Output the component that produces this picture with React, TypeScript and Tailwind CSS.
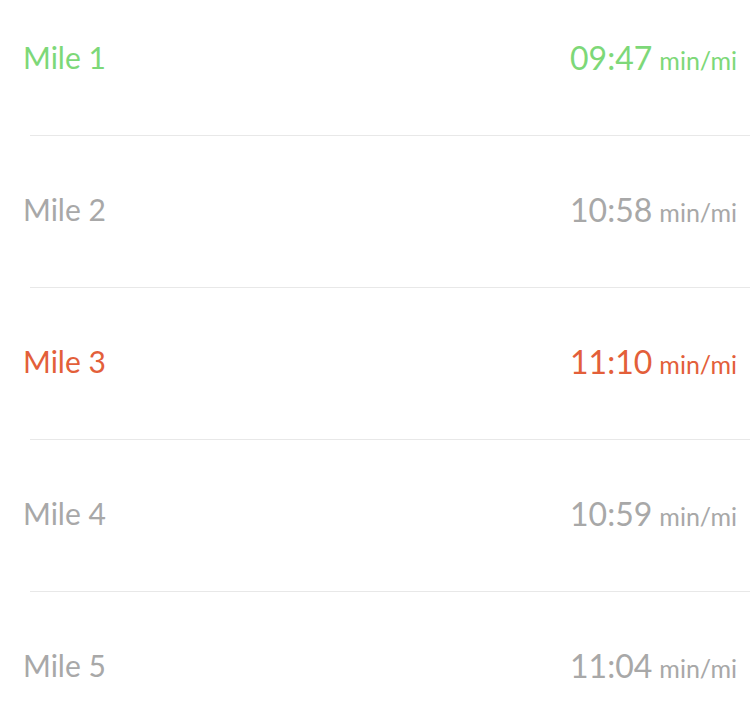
const splits = [
  { label: "Mile 1", pace: "09:47", color: "text-[#7dd878]" },
  { label: "Mile 2", pace: "10:58", color: "text-[#a8a8a8]" },
  { label: "Mile 3", pace: "11:10", color: "text-[#e35f3a]" },
  { label: "Mile 4", pace: "10:59", color: "text-[#a8a8a8]" },
  { label: "Mile 5", pace: "11:04", color: "text-[#a8a8a8]" },
];

export default function App() {
  return (
    <div className="w-[750px] h-[722px] overflow-hidden bg-white font-['Lato',sans-serif]">
      <ul className="-mt-[16px]">
        {splits.map((split, index) => (
          <li key={index} className="pl-[30px]">
            <div className="h-[151px] pb-[4px] flex items-center justify-between -ml-[7px] pr-[13px]">
              <span className={`text-[30px] ${split.color}`}>{split.label}</span>
              <span className={`flex items-baseline ${split.color}`}>
                <span className="text-[32px]">{split.pace}</span>
                <span className="text-[25px] ml-[7px]">min/mi</span>
              </span>
            </div>
            <div className="h-px bg-[#e8e8e8]" />
          </li>
        ))}
      </ul>
    </div>
  );
}
